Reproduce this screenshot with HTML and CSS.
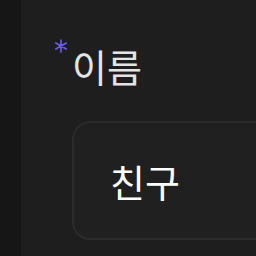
FILE: index.html
```html
<!DOCTYPE html>
<html lang="ko">
<head>
    <meta charset="UTF-8">
    <meta name="viewport" content="width=device-width, initial-scale=1.0">
    <title>이름</title>
    <link rel="stylesheet" href="styles.css">
</head>
<body>

<div class="layout">
    <div class="sidebar"></div>
    <div class="panel">
        <div class="field">
            <label class="label" for="name">
                <svg class="required" viewBox="0 0 14 14" width="14" height="14" aria-label="필수">
                    <path d="M7 1V13M1.8 4L12.2 10M1.8 10L12.2 4" />
                </svg>이름</label>
            <div class="input">친구</div>
        </div>
    </div>
</div>

</body>
</html>
```

FILE: styles.css
```css
* {
    margin: 0;
    padding: 0;
    box-sizing: border-box;
    font-family: "Noto Sans CJK KR", "Noto Sans", sans-serif;
}

body {
    background-color: #161616;
    width: 256px;
    height: 256px;
    overflow: hidden;
}

.layout {
    display: flex;
    height: 256px;
}

.sidebar {
    width: 21px;
    flex-shrink: 0;
    background-color: #161616;
}

.panel {
    flex: 1;
    min-width: 0;
    overflow: hidden;
    background-color: #1e1e1e;
    padding: 44px 0 0 51px;
}

.field {
    display: flex;
    flex-direction: column;
    gap: 33px;
    width: 300px;
}

.label {
    position: relative;
    font-size: 38px;
    line-height: 44px;
    color: #e4e4e4;
}

.required {
    position: absolute;
    left: -18px;
    top: -5px;
    fill: none;
    stroke: #6b5cf6;
    stroke-width: 1.6;
    stroke-linecap: round;
}

.input {
    height: 119px;
    border: 2px solid #2b2b2b;
    border-radius: 18px;
    background-color: #202020;
    padding-left: 36px;
    display: flex;
    align-items: center;
    font-size: 38px;
    color: #ffffff;
}
```
